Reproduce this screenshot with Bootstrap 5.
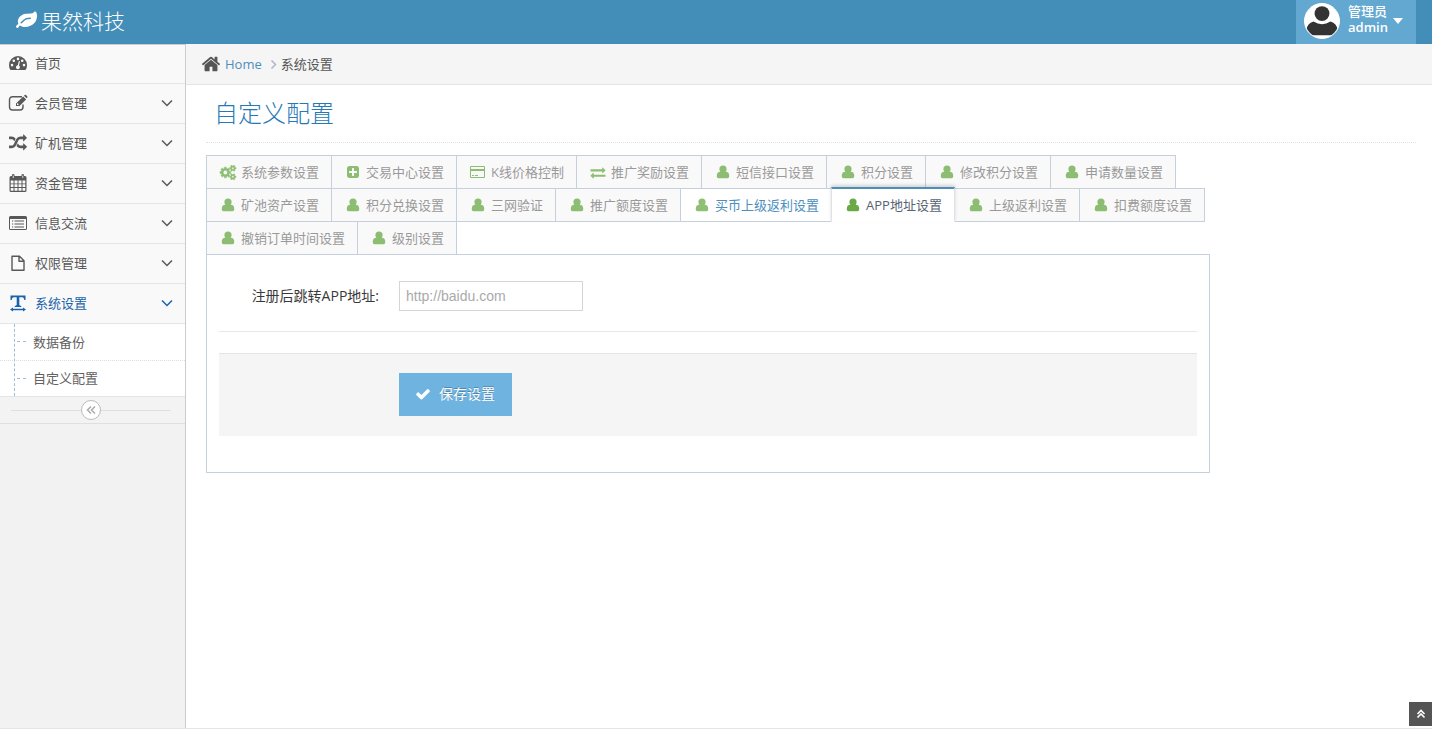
<!DOCTYPE html>
<html lang="zh-CN">
<head>
<meta charset="utf-8">
<meta name="viewport" content="width=device-width, initial-scale=1">
<title>自定义配置</title>
<link href="https://cdn.jsdelivr.net/npm/bootstrap@5.3.0/dist/css/bootstrap.min.css" rel="stylesheet">
<style>
body{font-family:"Open Sans","Noto Sans CJK SC",sans-serif;font-size:13px;line-height:20px;color:#393939;background:#fff}
a{text-decoration:none;color:#4c8fbd}
svg{fill:currentColor;flex:none}
.app-top{background:#438eb9;color:#fff;height:44px}
.brand{color:#fff;font-size:21px;font-weight:300;padding-bottom:3px}
.brand:hover{color:#fff}
.account{background:#62a8d1;border:0;color:#fff;height:44px;padding:0 12px 2px 8px;margin-right:16px;line-height:16px;text-align:left;font-weight:600}
.account-name{font-weight:500}
.avatar{width:36px;height:36px;border-radius:50%;background:#fff;border:1px solid #fff;color:#333}
.shell{min-height:calc(100vh - 46px)}
.side{width:186px;background:#f2f2f2;border-right:1px solid #ccc;border-top:1px solid #ccc}
.side-link{height:40px;padding:0 12px 2px 8px;color:#585858;background:#f9f9f9;border-bottom:1px solid #e5e5e5}
.side-link:first-child{height:39px}
.menu-text{margin-left:7px}
.side-link.current{color:#1963aa}
.sub-menu{background:#fff;border-bottom:1px solid #e5e5e5;position:relative}
.sub-menu::before{content:"";position:absolute;left:14px;top:0;bottom:0;border-left:1px dashed #9dbdd6;z-index:1}
.sub-link{height:36px;padding:0 0 1px 17px;color:#616161}
.sub-link + .sub-link{border-top:1px dotted #ddd}
.sub-link::before{content:"";width:9px;border-top:1px dashed #9dbdd6;margin-right:7px}
.side-toggle{height:27px;border-bottom:1px solid #e0e0e0;background:#f3f3f3;padding:0 14px 0 11px}
.side-toggle::before,.side-toggle::after{content:"";flex:1;border-top:1px solid #e0e0e0}
.side-toggle button{width:20px;height:20px;border:1px solid #bbb;border-radius:50%;background:#fff;color:#aaa}
.crumbs{height:41px;background:#f5f5f5;border-bottom:1px solid #e5e5e5;padding:0 15px;color:#555}
.page{padding:0 16px 0 20px}
.page-title{font-size:24px;font-weight:300;line-height:28px;color:#2679b5;margin:0 0 12px;padding:14px 8px 15px;border-bottom:1px dotted #e2e2e2}
.cfg-tabs{border:0;padding-left:1px}
.cfg-tabs .nav-item{margin:0 0 0 -1px}
.cfg-tabs .nav-link{height:34px;margin:0 0 -1px;padding:0 12px;border:1px solid #c5d0dc;border-radius:0;background:#f9f9f9;color:#999;display:flex;align-items:center;line-height:16px}
.cfg-tabs .nav-link svg{color:#69aa46;opacity:.75;margin-right:4px}
.cfg-tabs .nav-link.hot{background:#fff;color:#4c8fbd}
.cfg-tabs .nav-link.active{position:relative;z-index:2;height:35px;margin:-1px 0;border-top:2px solid #4c8fbd;border-bottom-color:#fff;background:#fff;color:#576373;box-shadow:0 -2px 3px 0 rgba(0,0,0,.15)}
.cfg-tabs .nav-link.active svg{opacity:1}
.cfg-pane{border:1px solid #c5d0dc;padding:26px 12px 36px}
.field-label{width:160px;margin-right:20px;text-align:right;font-size:14px}
.field-input{width:184px;height:30px;border:1px solid #d5d5d5;border-radius:0;padding:4px 6px;font:14px/20px "Liberation Sans",sans-serif;color:#858585}
.field-input::placeholder{color:#aaa}
.rule{border-top:1px solid #e8e8e8;margin:20px 0 21px}
.actions{background:#f5f5f5;border-top:1px solid #e5e5e5;padding:19px 0 20px 180px}
.save{height:43px;border:0;border-radius:0;background:#6fb3e0;color:#fff;font-size:14px;padding:0 17px 2px 16px;text-shadow:0 -1px 0 rgba(0,0,0,.25)}
.page-end{border-top:1px solid #e5e5e5;height:2px}
.to-top{position:fixed;right:0;bottom:4px;width:23px;height:24px;background:#555;color:#fff;border:0}
</style>
</head>
<body>
<svg class="d-none">
<symbol id="i-user" viewBox="0 0 18 16"><path d="M9 1.500a3.600 3.600 0 0 1 3.600 3.600Q12.600 6.600 11.700 7.700q3.500.2 3.500 3.800v1q0 1.700-1.700 1.700h-9q-1.700 0-1.700-1.700v-1q0-3.600 3.500-3.800-.9-1.100-.9-2.600A3.600 3.600 0 0 1 9 1.500z"/></symbol>
<symbol id="i-cogs" viewBox="0 0 1920 1792"><path stroke="currentColor" stroke-width="60" d="M896 896q0-106-75-181t-181-75-181 75-75 181 75 181 181 75 181-75 75-181zm768 512q0-52-38-90t-90-38-90 38-38 90q0 53 37.5 90.5t90.5 37.5 90.5-37.5 37.5-90.5zm0-1024q0-52-38-90t-90-38-90 38-38 90q0 53 37.5 90.5t90.5 37.5 90.5-37.5 37.5-90.5zm-384 421v185q0 10-7 19.5t-16 10.5l-155 24q-11 35-32 76 34 48 90 115 7 11 7 20 0 12-7 19-23 30-82.5 89.5t-78.5 59.5q-11 0-21-7l-115-90q-37 19-77 31-11 108-23 155-7 24-30 24h-186q-11 0-20-7.5t-10-17.5l-23-153q-34-10-75-31l-118 89q-7 7-20 7-11 0-21-8-144-133-144-160 0-9 7-19 10-14 41-53t47-61q-23-44-35-82l-152-24q-10-1-17-9.5t-7-19.5v-185q0-10 7-19.5t16-10.5l155-24q11-35 32-76-34-48-90-115-7-11-7-20 0-12 7-20 22-30 82-89t79-59q11 0 21 7l115 90q34-18 77-32 11-108 23-154 7-24 30-24h186q11 0 20 7.5t10 17.5l23 153q34 10 75 31l118-89q8-7 20-7 11 0 21 8 144 133 144 160 0 8-7 19-12 16-42 54t-45 60q23 48 34 82l152 23q10 2 17 10.5t7 19.5zm640 533v140q0 16-149 31-12 27-30 52 51 113 51 138 0 4-4 7-122 71-124 71-8 0-46-47t-52-68q-20 2-30 2t-30-2q-14 21-52 68t-46 47q-2 0-124-71-4-3-4-7 0-25 51-138-18-25-30-52-149-15-149-31v-140q0-16 149-31 13-29 30-52-51-113-51-138 0-4 4-7 4-2 35-20t59-34 30-16q8 0 46 46.5t52 67.5q20-2 30-2t30 2q51-71 92-112l6-2q4 0 124 70 4 3 4 7 0 25-51 138 17 23 30 52 149 15 149 31zm0-1024v140q0 16-149 31-12 27-30 52 51 113 51 138 0 4-4 7-122 71-124 71-8 0-46-47t-52-68q-20 2-30 2t-30-2q-14 21-52 68t-46 47q-2 0-124-71-4-3-4-7 0-25 51-138-18-25-30-52-149-15-149-31v-140q0-16 149-31 13-29 30-52-51-113-51-138 0-4 4-7 4-2 35-20t59-34 30-16q8 0 46 46.5t52 67.5q20-2 30-2t30 2q51-71 92-112l6-2q4 0 124 70 4 3 4 7 0 25-51 138 17 23 30 52 149 15 149 31z"/></symbol>
<symbol id="i-down" viewBox="0 0 12 12"><path d="M1 3.500l5 5 5-5" fill="none" stroke="currentColor" stroke-width="1.500"/></symbol>
</svg>

<header class="app-top d-flex justify-content-between align-items-center">
  <a class="brand d-flex align-items-center ps-3" href="#">
    <svg width="21" height="21" viewBox="0 0 1792 1792"><path d="M1280 704q0-26-19-45t-45-19q-172 0-318 49.5t-259.5 134-235.5 219.5q-19 21-19 45 0 26 19 45t45 19q24 0 45-19 27-24 74-71t67-66q137-124 268.5-176t313.5-52q26 0 45-19t19-45zm512-198q0 95-20 193-46 224-184.5 383t-357.5 268q-214 108-438 108-148 0-286-47-15-5-88-42t-96-37q-16 0-39.5 32t-45 70-52.5 70-60 32q-43 0-63.5-17.5t-45.5-59.5q-2-4-6-11t-5.5-10-3-9.5-1.5-13.5q0-35 31-73.5t68-65.5 68-56 31-48q0-4-14-38t-16-44q-9-51-9-104 0-115 43.5-220t119-184.5 170.5-139 204-95.5q55-18 145-25.5t179.5-9 178.5-6 163.5-24 113.5-56.5l29.5-29.5 29.5-28 27-20 36.5-16 43.5-4.5q39 0 70.5 46t47.5 112 24 124 8 96z"/></svg>
    <span class="ms-1">果然科技</span>
  </a>
  <button class="account d-flex align-items-center" type="button">
    <svg class="avatar" viewBox="0 0 32 32"><circle cx="16" cy="9" r="7"/><path d="M8 16.500q8 5 16 0 6 2 6.500 7.500 0 4-3 5.500h-23q-3-1.500-3-5.500Q2 18.500 8 16.500z"/></svg>
    <span class="ms-2 mb-1"><span class="account-name">管理员</span><br>admin</span>
    <svg class="ms-1" width="12" height="6" viewBox="0 0 12 6"><path d="M1 0h10L6 6z"/></svg>
  </button>
</header>

<div class="shell d-flex">
  <aside class="side flex-shrink-0">
    <nav class="d-flex flex-column">
      <a class="side-link d-flex align-items-center" href="#"><svg width="20" height="20" viewBox="0 0 20 20"><path fill-rule="evenodd" d="M10 3a9 9 0 0 1 9 9q0 2.800-1.200 4.500-.3.500-.8.500H3q-.5 0-.8-.5Q1 14.800 1 12a9 9 0 0 1 9-9zM4 10.800a1.300 1.300 0 1 0 0 2.600 1.300 1.300 0 0 0 0-2.600zm1.800-4.300a1.300 1.300 0 1 0 0 2.600 1.300 1.300 0 0 0 0-2.600zM10 4.600a1.300 1.300 0 1 0 0 2.600 1.300 1.300 0 0 0 0-2.600zm4.200 1.900a1.300 1.300 0 1 0 0 2.600 1.300 1.300 0 0 0 0-2.600zM16 10.800a1.300 1.300 0 1 0 0 2.600 1.300 1.300 0 0 0 0-2.600zM10.900 8l-1.100 4.200a2 2 0 1 0 1.200.3l1-4.200z"/></svg><span class="menu-text">首页</span></a>
      <a class="side-link d-flex align-items-center" href="#"><svg width="20" height="20" viewBox="0 0 20 20"><path d="M14 3.700H4.500a3 3 0 0 0-3 3V14a3 3 0 0 0 3 3H12a3 3 0 0 0 3-3v-2.500" fill="none" stroke="currentColor" stroke-width="1.400"/><path fill-rule="evenodd" d="M15.200 3.500l2.900 2.900-6.600 6.600H8V10.400zM9 10.900v1h1.200l.5-.6-1.200-1.200zM16 2.700l.7-.7q.6-.6 1.300 0l1.200 1.200q.6.700 0 1.300l-.6.800z"/></svg><span class="menu-text">会员管理</span><svg class="ms-auto" width="12" height="12"><use href="#i-down"/></svg></a>
      <a class="side-link d-flex align-items-center" href="#"><svg width="20" height="20" viewBox="-100 0 1992 1792"><path d="M666 481q-60 92-137 273-22-45-37-72.500t-40.500-63.500-51-56.500-63-35-81.500-14.500h-224q-14 0-23-9t-9-23v-192q0-14 9-23t23-9h224q250 0 410 225zm1126 799q0 14-9 23l-320 320q-9 9-23 9-13 0-22.500-9.500t-9.500-22.500v-192q-32 0-85 .5t-81 1-73-1-71-5-64-10.500-63-18.500-58-28.500-59-40-55-53.500-56-69.500q59-93 136-273 22 45 37 72.500t40.500 63.500 51 56.500 63 35 81.500 14.500h256v-192q0-14 9-23t23-9q12 0 24 10l319 319q9 9 9 23zm0-896q0 14-9 23l-320 320q-9 9-23 9-13 0-22.500-9.500t-9.500-22.500v-192h-256q-48 0-87 15t-69 45-51 61.500-45 77.500q-32 62-78 171-29 66-49.500 111t-54 105-64 100-74 83-90 68.500-106.500 42-128 16.500h-224q-14 0-23-9t-9-23v-192q0-14 9-23t23-9h224q48 0 87-15t69-45 51-61.500 45-77.500q32-62 78-171 29-66 49.500-111t54-105 64-100 74-83 90-68.500 106.500-42 128-16.500h256v-192q0-14 9-23t23-9q12 0 24 10l319 319q9 9 9 23z"/></svg><span class="menu-text">矿机管理</span><svg class="ms-auto" width="12" height="12"><use href="#i-down"/></svg></a>
      <a class="side-link d-flex align-items-center" href="#"><svg width="20" height="20" viewBox="0 0 20 20"><path fill-rule="evenodd" d="M3 3h1V2q0-1 1.200-1T6.500 2v1h7V2q0-1 1.200-1T16 2v1h1q1.500 0 1.500 1.500v13q0 1.500-1.500 1.500H3q-1.500 0-1.500-1.500v-13Q1.500 3 3 3zM2.700 7.500v3h2.800v-3zm3.800 0v3h3v-3zm4 0v3h3v-3zm4 0v3h2.800v-3zM2.700 11.300V14h2.800v-2.700zm3.800 0V14h3v-2.700zm4 0V14h3v-2.700zm4 0V14h2.800v-2.700zM2.700 15v2.800h2.800V15zm3.800 0v2.800h3V15zm4 0v2.800h3V15zm4 0v2.800h2.800V15zM4.800 2.500V5h.8V2.500zm9.600 0V5h.8V2.500z"/></svg><span class="menu-text">资金管理</span><svg class="ms-auto" width="12" height="12"><use href="#i-down"/></svg></a>
      <a class="side-link d-flex align-items-center" href="#"><svg width="20" height="20" viewBox="0 0 20 20"><path fill-rule="evenodd" d="M2.500 3h15Q19 3 19 4.500v11q0 1.500-1.500 1.500h-15Q1 17 1 15.500v-11Q1 3 2.500 3zM2 6v10h16V6zM4 7.500h1.200v1H4zm2.500 0H16v1H6.500zM4 10.500h1.200v1H4zm2.500 0H16v1H6.500zM4 13.500h1.200v1H4zm2.500 0H16v1H6.500z"/></svg><span class="menu-text">信息交流</span><svg class="ms-auto" width="12" height="12"><use href="#i-down"/></svg></a>
      <a class="side-link d-flex align-items-center" href="#"><svg width="20" height="20" viewBox="0 0 20 20"><path d="M4 3.200h7.500l4.500 4.500v9.600H4zM11 3.200v5h5" fill="none" stroke="currentColor" stroke-width="1.400" stroke-linejoin="round"/></svg><span class="menu-text">权限管理</span><svg class="ms-auto" width="12" height="12"><use href="#i-down"/></svg></a>
      <a class="side-link current d-flex align-items-center" href="#"><svg width="20" height="20" viewBox="0 0 20 20"><path d="M2.500 2.500h15V7h-1.200Q16 4.500 14.500 4.300h-3.200v7.500q0 1 2 1.200v1H6.700v-1q2-.2 2-1.200V4.300H5.500Q4 4.500 3.700 7H2.500zM2 16.500l3-2v1.300h10v-1.300l3 2-3 2v-1.300H5v1.300z"/></svg><span class="menu-text">系统设置</span><svg class="ms-auto" width="12" height="12"><use href="#i-down"/></svg></a>
      <div class="sub-menu">
        <a class="sub-link d-flex align-items-center" href="#">数据备份</a>
        <a class="sub-link d-flex align-items-center" href="#">自定义配置</a>
      </div>
    </nav>
    <div class="side-toggle d-flex align-items-center">
      <button type="button" class="d-flex align-items-center justify-content-center p-0" aria-label="收起菜单"><svg width="10" height="10" viewBox="0 0 10 10"><path d="M5 1.500L1.500 5 5 8.500M9 1.500L5.500 5 9 8.500" fill="none" stroke="currentColor" stroke-width="1.500"/></svg></button>
    </div>
  </aside>

  <main class="flex-grow-1">
    <div class="crumbs d-flex align-items-center">
      <svg width="20" height="20" viewBox="50 0 1692 1792"><path d="M1472 992v480q0 26-19 45t-45 19h-384v-384h-256v384h-384q-26 0-45-19t-19-45v-480q0-1 .5-3t.5-3l575-474 575 474q1 2 1 6zm223-69l-62 74q-8 9-21 11h-3q-13 0-21-7l-692-577-692 577q-12 8-24 7-13-2-21-11l-62-74q-8-10-7-23.500t11-21.500l719-599q32-26 76-26t76 26l244 204v-195q0-14 9-23t23-9h192q14 0 23 9t9 23v408l219 182q10 8 11 21.500t-7 23.500z"/></svg>
      <a class="ms-1" href="#">Home</a>
      <svg class="ms-1" width="15" height="10" viewBox="0 0 15 10"><path d="M5.500 1.500l4 4-4 4" fill="none" stroke="#b2b6bf" stroke-width="1.500"/></svg>
      <span>系统设置</span>
    </div>
    <div class="page">
      <h1 class="page-title">自定义配置</h1>
      <div class="row">
        <div class="col-10">
          <ul class="nav nav-tabs cfg-tabs">
            <li class="nav-item"><a class="nav-link" href="#"><svg width="18" height="15"><use href="#i-cogs"/></svg>系统参数设置</a></li>
            <li class="nav-item"><a class="nav-link" href="#"><svg width="18" height="14" viewBox="0 0 1792 1792"><path d="M1408 960v-128q0-26-19-45t-45-19h-320v-320q0-26-19-45t-45-19h-128q-26 0-45 19t-19 45v320h-320q-26 0-45 19t-19 45v128q0 26 19 45t45 19h320v320q0 26 19 45t45 19h128q26 0 45-19t19-45v-320h320q26 0 45-19t19-45zm256-544v960q0 119-84.500 203.500t-203.500 84.500h-960q-119 0-203.500-84.500t-84.500-203.500v-960q0-119 84.500-203.500t203.500-84.500h960q119 0 203.500 84.500t84.500 203.500z"/></svg>交易中心设置</a></li>
            <li class="nav-item"><a class="nav-link" href="#"><svg width="18" height="14" viewBox="0 0 18 14"><path fill-rule="evenodd" d="M2 1h13q1 0 1 1v10q0 1-1 1H2q-1 0-1-1V2q0-1 1-1zm0 1v2h13V2zm0 4v6h13V6zm1 4h2v1H3zm3 0h3v1H6z"/></svg>K线价格控制</a></li>
            <li class="nav-item"><a class="nav-link" href="#"><svg width="18" height="15" viewBox="0 0 1792 1792"><path d="M1792 1184v192q0 13-9.500 22.500t-22.500 9.500h-1376v192q0 13-9.500 22.500t-22.500 9.500q-12 0-24-10l-319-320q-9-9-9-22 0-14 9-23l320-320q9-9 23-9 13 0 22.500 9.500t9.500 22.500v192h1376q13 0 22.500 9.500t9.500 22.500zm0-544q0 14-9 23l-320 320q-9 9-23 9-13 0-22.500-9.500t-9.500-22.500v-192h-1376q-13 0-22.500-9.500t-9.500-22.500v-192q0-13 9.500-22.500t22.500-9.500h1376v-192q0-14 9-23t23-9q12 0 24 10l319 319q9 9 9 23z"/></svg>推广奖励设置</a></li>
            <li class="nav-item"><a class="nav-link" href="#"><svg width="18" height="16"><use href="#i-user"/></svg>短信接口设置</a></li>
            <li class="nav-item"><a class="nav-link" href="#"><svg width="18" height="16"><use href="#i-user"/></svg>积分设置</a></li>
            <li class="nav-item"><a class="nav-link" href="#"><svg width="18" height="16"><use href="#i-user"/></svg>修改积分设置</a></li>
            <li class="nav-item"><a class="nav-link" href="#"><svg width="18" height="16"><use href="#i-user"/></svg>申请数量设置</a></li>
            <li class="nav-item"><a class="nav-link" href="#"><svg width="18" height="16"><use href="#i-user"/></svg>矿池资产设置</a></li>
            <li class="nav-item"><a class="nav-link" href="#"><svg width="18" height="16"><use href="#i-user"/></svg>积分兑换设置</a></li>
            <li class="nav-item"><a class="nav-link" href="#"><svg width="18" height="16"><use href="#i-user"/></svg>三网验证</a></li>
            <li class="nav-item"><a class="nav-link" href="#"><svg width="18" height="16"><use href="#i-user"/></svg>推广额度设置</a></li>
            <li class="nav-item"><a class="nav-link hot" href="#"><svg width="18" height="16"><use href="#i-user"/></svg>买币上级返利设置</a></li>
            <li class="nav-item"><a class="nav-link active" href="#"><svg width="18" height="16"><use href="#i-user"/></svg>APP地址设置</a></li>
            <li class="nav-item"><a class="nav-link" href="#"><svg width="18" height="16"><use href="#i-user"/></svg>上级返利设置</a></li>
            <li class="nav-item"><a class="nav-link" href="#"><svg width="18" height="16"><use href="#i-user"/></svg>扣费额度设置</a></li>
            <li class="nav-item"><a class="nav-link" href="#"><svg width="18" height="16"><use href="#i-user"/></svg>撤销订单时间设置</a></li>
            <li class="nav-item"><a class="nav-link" href="#"><svg width="18" height="16"><use href="#i-user"/></svg>级别设置</a></li>
          </ul>
          <form class="cfg-pane">
            <div class="d-flex align-items-center">
              <label class="field-label" for="app-url">注册后跳转APP地址:</label>
              <input class="field-input" id="app-url" type="text" placeholder="http://baidu.com">
            </div>
            <div class="rule"></div>
            <div class="actions">
              <button class="save d-flex align-items-center" type="button"><svg width="16" height="16" viewBox="0 0 1792 1792"><path d="M1671 566q0 40-28 68l-724 724-136 136q-28 28-68 28t-68-28l-136-136-362-362q-28-28-28-68t28-68l136-136q28-28 68-28t68 28l294 295 656-657q28-28 68-28t68 28l136 136q28 28 28 68z"/></svg><span class="ms-2">保存设置</span></button>
            </div>
          </form>
        </div>
      </div>
    </div>
  </main>
</div>
<div class="page-end"></div>
<button class="to-top d-flex align-items-center justify-content-center p-0" type="button" aria-label="返回顶部"><svg width="10" height="10" viewBox="0 0 10 10"><path d="M1.500 5L5 1.500 8.500 5M1.500 8.500L5 5l3.500 3.500" fill="none" stroke="currentColor" stroke-width="1.600"/></svg></button>
<script src="https://cdn.jsdelivr.net/npm/bootstrap@5.3.0/dist/js/bootstrap.bundle.min.js"></script>
</body>
</html>
